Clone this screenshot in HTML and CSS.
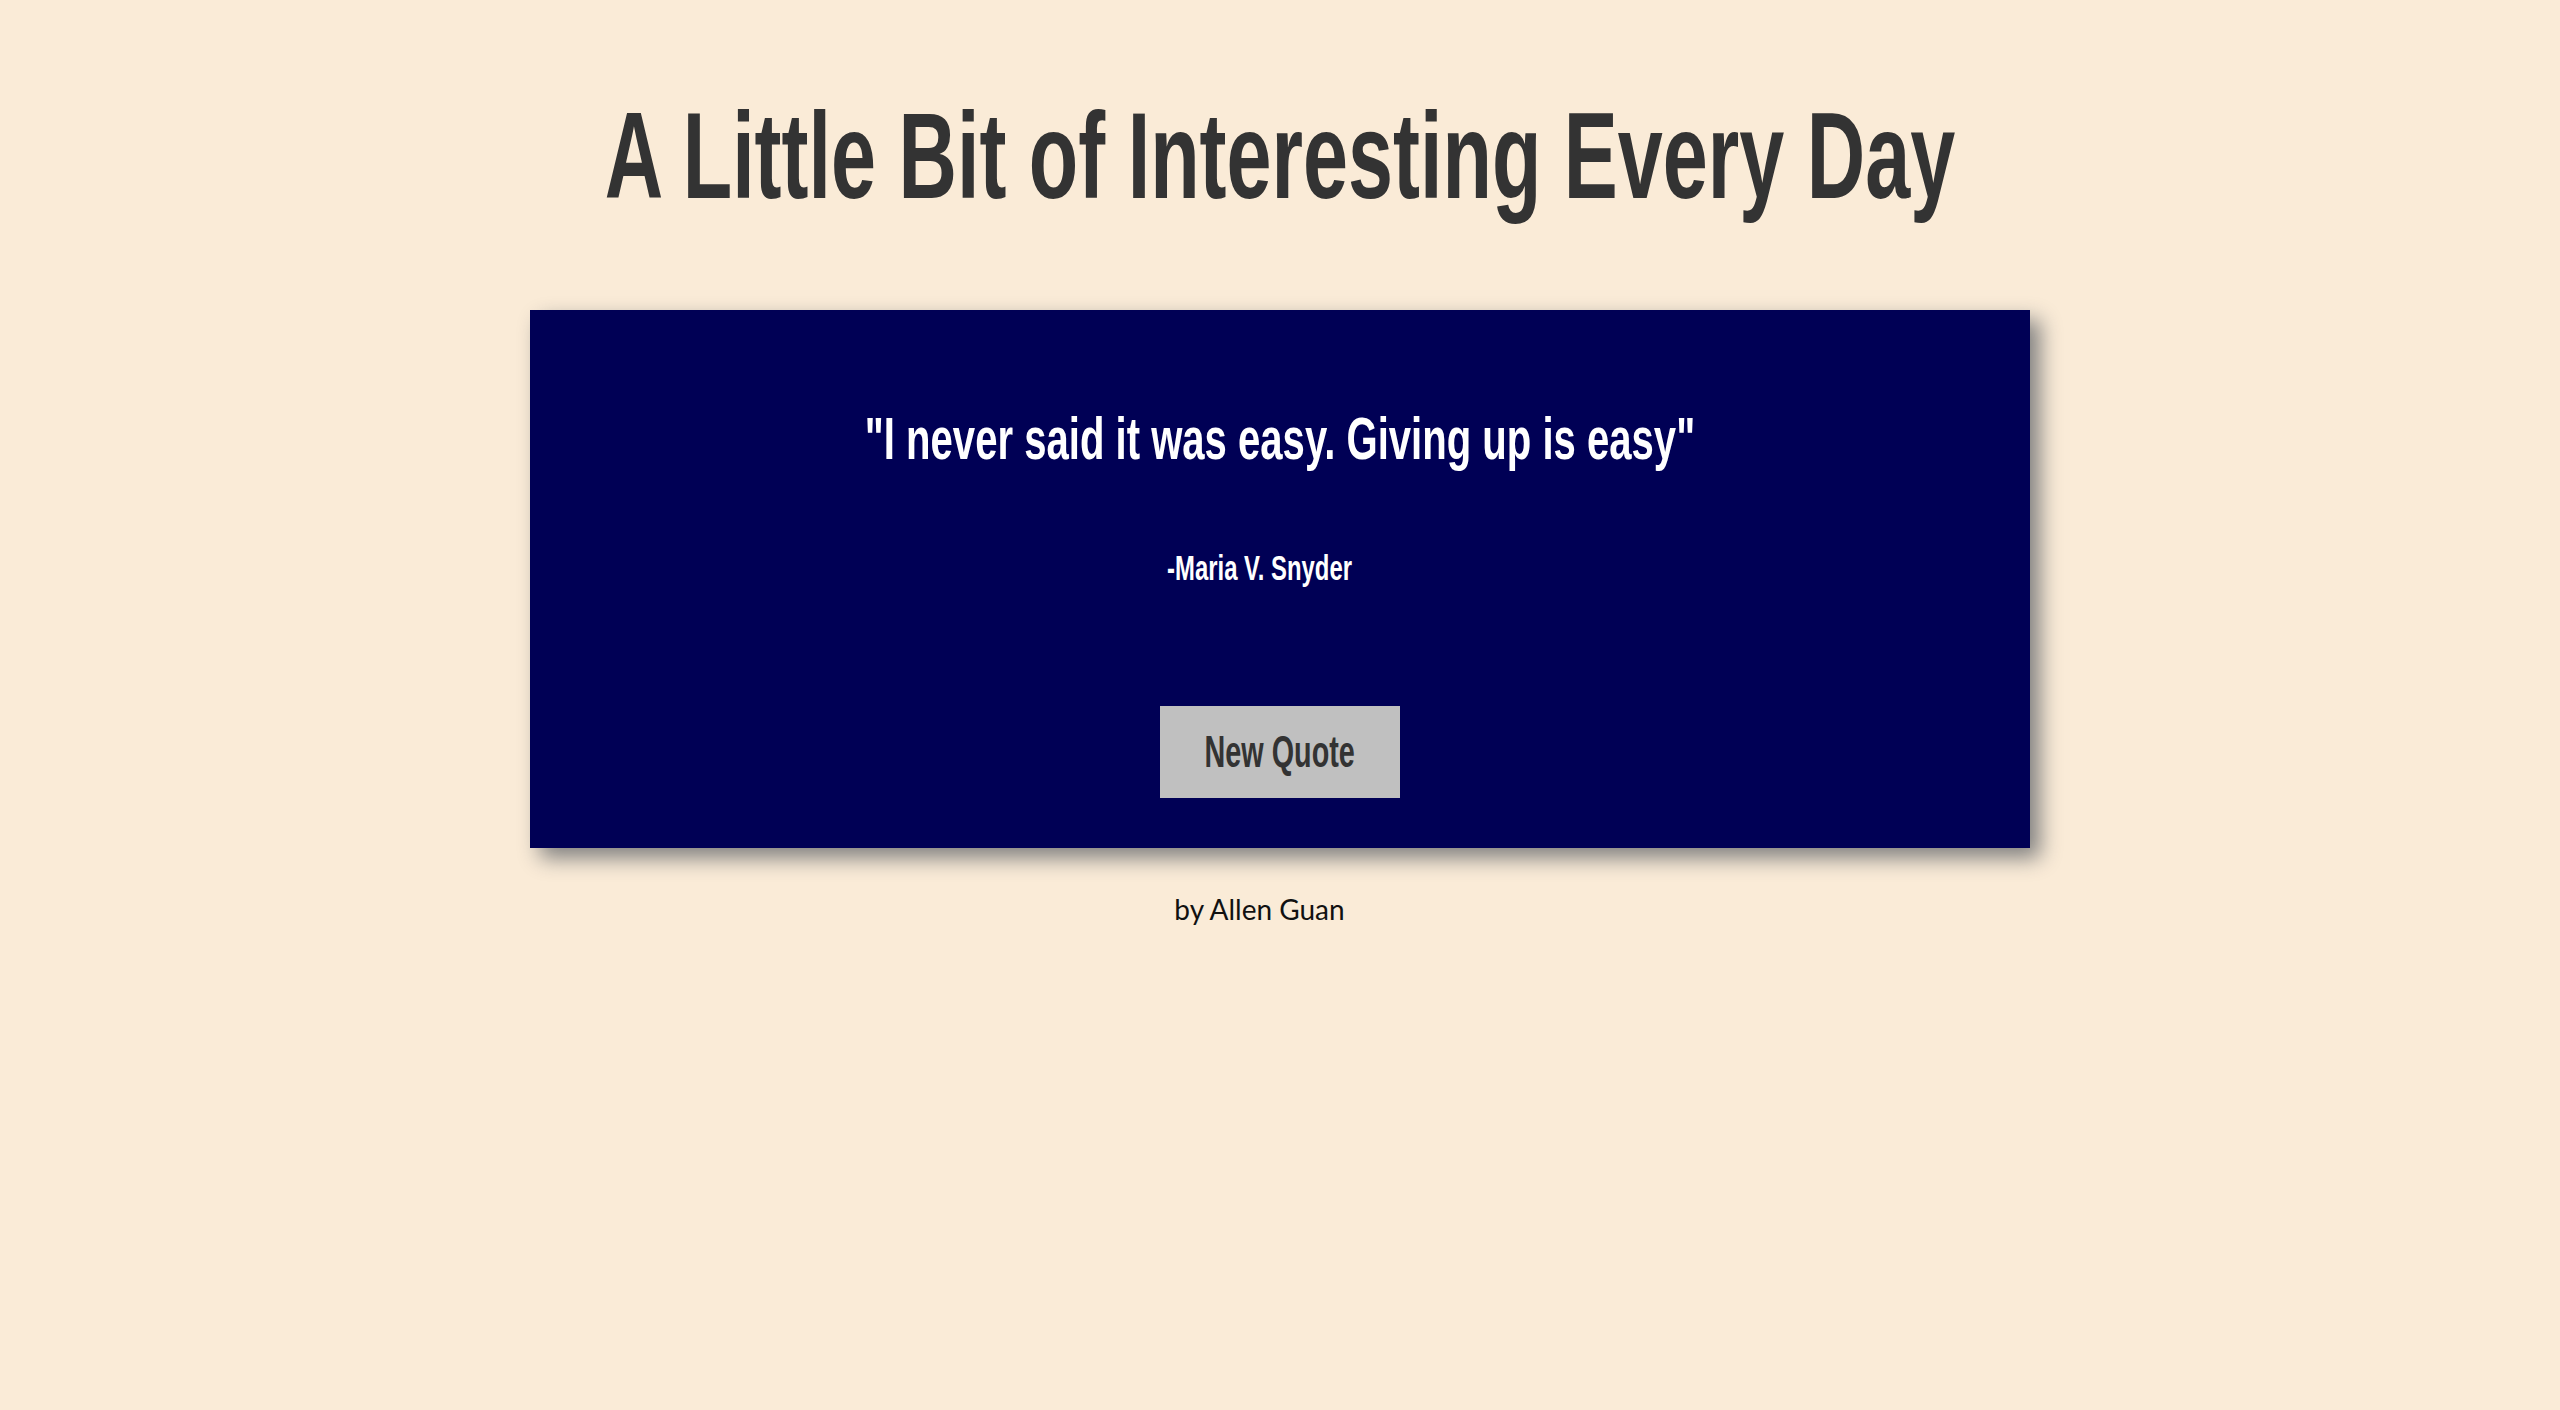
FILE: index.html
```html
<!DOCTYPE html>
<html lang="en">
<head>
<meta charset="utf-8">
<title>Random Quote Machine</title>
<link rel="stylesheet" href="styles.css">
</head>
<body>
  <h1 class="title">A Little Bit of Interesting Every Day</h1>
  <main class="card">
    <p class="quote">"I never said it was easy. Giving up is easy"</p>
    <p class="author">-Maria V. Snyder</p>
    <div class="actions">
      <button class="new-quote" type="button"><span class="btn-label">New Quote</span></button>
    </div>
  </main>
  <footer class="footer">by Allen Guan</footer>
</body>
</html>
```

FILE: styles.css
```css
html, body {
  margin: 0;
  padding: 0;
}

body {
  background: #faebd7;
  min-height: 1410px;
  font-family: "Liberation Sans", Arial, sans-serif;
}

.title {
  margin: 0;
  padding-top: 96px;
  font-family: "Liberation Sans", Arial, sans-serif;
  font-weight: 700;
  font-size: 121.5px;
  line-height: 1;
  color: #333333;
  text-align: center;
  white-space: nowrap;
  transform: scaleX(0.666);
}

.card {
  box-sizing: border-box;
  width: 1500px;
  margin: 92px auto 0;
  padding: 99px 0 50px;
  background: #000055;
  box-shadow: 10px 10px 20px #808080;
  text-align: center;
}

.quote {
  margin: 0;
  font-family: "Liberation Sans", Arial, sans-serif;
  font-weight: 700;
  font-size: 60px;
  line-height: 1;
  color: #ffffff;
  white-space: nowrap;
  transform: scaleX(0.668);
}

.author {
  margin: 81px 0 0;
  padding-right: 60px;
  font-family: "Liberation Sans", Arial, sans-serif;
  font-weight: 700;
  font-size: 35px;
  line-height: 1;
  color: #ffffff;
  white-space: nowrap;
  transform: scaleX(0.682);
}

.actions {
  margin-top: 121px;
  display: flex;
  justify-content: center;
}

.new-quote {
  box-sizing: border-box;
  width: 240px;
  height: 92px;
  padding: 24px 0 23px;
  border: 0;
  border-radius: 0;
  background: #c0c0c0;
  color: #333333;
  font-family: "Liberation Sans", Arial, sans-serif;
  font-weight: 700;
  font-size: 44.7px;
  line-height: 1;
  cursor: pointer;
  display: flex;
  justify-content: center;
  align-items: flex-start;
  overflow: visible;
}

.btn-label {
  display: inline-block;
  white-space: nowrap;
  transform: scaleX(0.644);
}

.footer {
  margin-top: 47px;
  padding-right: 41px;
  font-family: "Lato", "Open Sans", sans-serif;
  font-size: 28px;
  line-height: 1;
  color: #111111;
  text-align: center;
}
```
